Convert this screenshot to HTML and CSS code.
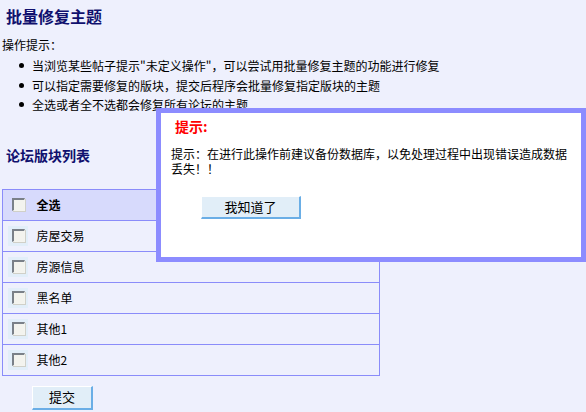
FILE: index.html
```html
<!DOCTYPE html>
<html lang="zh-CN">
<head>
<meta charset="utf-8">
<title>批量修复主题</title>
<link rel="stylesheet" href="styles.css">
</head>
<body>
<div class="page">
  <h1 class="title">批量修复主题</h1>
  <div class="tips-head">操作提示：</div>
  <ul class="tips">
    <li>当浏览某些帖子提示"未定义操作"，可以尝试用批量修复主题的功能进行修复</li>
    <li>可以指定需要修复的版块，提交后程序会批量修复指定版块的主题</li>
    <li>全选或者全不选都会修复所有论坛的主题</li>
  </ul>
  <h2 class="subtitle">论坛版块列表</h2>
  <table class="forums">
    <tr class="head">
      <td class="c-cb"><span class="cbwrap"><span class="cb"></span></span></td>
      <td class="c-name"><b>全选</b></td>
    </tr>
    <tr>
      <td class="c-cb"><span class="cbwrap"><span class="cb"></span></span></td>
      <td class="c-name">房屋交易</td>
    </tr>
    <tr>
      <td class="c-cb"><span class="cbwrap"><span class="cb"></span></span></td>
      <td class="c-name">房源信息</td>
    </tr>
    <tr>
      <td class="c-cb"><span class="cbwrap"><span class="cb"></span></span></td>
      <td class="c-name">黑名单</td>
    </tr>
    <tr>
      <td class="c-cb"><span class="cbwrap"><span class="cb"></span></span></td>
      <td class="c-name">其他1</td>
    </tr>
    <tr>
      <td class="c-cb"><span class="cbwrap"><span class="cb"></span></span></td>
      <td class="c-name">其他2</td>
    </tr>
  </table>
  <div class="actions"><button class="btn btn-submit" type="button">提交</button></div>
</div>

<div class="dialog">
  <div class="dlg-title">提示:</div>
  <div class="dlg-text">提示：在进行此操作前建议备份数据库，以免处理过程中出现错误造成数据丢失！！</div>
  <div class="dlg-actions"><button class="btn btn-ok" type="button">我知道了</button></div>
</div>
</body>
</html>
```

FILE: styles.css
```css
html, body {
  margin: 0;
  padding: 0;
  background: #eef0fd;
}
body {
  font-family: "Noto Sans CJK SC", "Liberation Sans", sans-serif;
  font-size: 12px;
  color: #000;
  width: 586px;
  height: 412px;
  overflow: hidden;
  position: relative;
}
.page {
  padding: 0 0 0 2px;
}
.title {
  margin: 0;
  padding: 6px 0 0 4px;
  font-size: 16px;
  line-height: 20px;
  font-weight: bold;
  color: #10106e;
}
.tips-head {
  margin-top: 11px;
  line-height: 16px;
}
.tips {
  margin: 3px 0 0 0;
  padding: 0 0 0 30px;
  list-style: none;
}
.tips li {
  position: relative;
  line-height: 19.5px;
  white-space: nowrap;
}
.tips li::before {
  content: "";
  position: absolute;
  left: -13px;
  top: 7px;
  width: 5px;
  height: 5px;
  border-radius: 50%;
  background: #000;
}
.subtitle {
  margin: 31px 0 0 0;
  padding-left: 4px;
  font-size: 14px;
  line-height: 18px;
  font-weight: bold;
  color: #10106e;
}
.forums {
  margin-top: 25px;
  border-collapse: collapse;
  width: 378px;
}
.forums td {
  border-top: 1px solid #8a8cfa;
  border-bottom: 1px solid #8a8cfa;
  height: 31px;
  padding: 0;
  box-sizing: border-box;
  vertical-align: middle;
}
.forums td:first-child { border-left: 1px solid #8a8cfa; }
.forums td:last-child { border-right: 1px solid #8a8cfa; }
.forums tr.head td { background: #d7dafc; }
.c-cb {
  width: 34px;
  padding-left: 5px !important;
}
.cbwrap {
  display: flex;
  align-items: center;
  justify-content: center;
  width: 20px;
  height: 20px;
  background: #e2eef9;
}
.head .cbwrap { background: transparent; }
.cb {
  display: block;
  width: 13px;
  height: 13px;
  box-sizing: border-box;
  border-top: 2px solid #7a8088;
  border-left: 2px solid #7a8088;
  border-right: 1px solid #f4f4f0;
  border-bottom: 1px solid #f4f4f0;
  background: #f3f3ee;
  box-shadow: 1px 1px 0 #d0d0c8;
}
.c-name {
  padding-left: 0;
}
.actions {
  padding: 10px 0 0 30px;
}
.btn {
  font-family: "Noto Sans CJK SC", "Liberation Sans", sans-serif;
  font-size: 13px;
  line-height: 18px;
  color: #000;
  background: #e1eef8;
  border-top: 1px solid #ffffff;
  border-left: 1px solid #ffffff;
  border-right: 2px solid #6aaee6;
  border-bottom: 2px solid #6aaee6;
  padding: 0;
  margin: 0;
  box-sizing: border-box;
}
.btn-submit {
  width: 61px;
  height: 24px;
}
.dialog {
  position: absolute;
  left: 156px;
  top: 108px;
  width: 430px;
  height: 154px;
  box-sizing: border-box;
  border: 5px solid #8c8cff;
  background: #fff;
  padding: 4px 10px 0 10px;
}
.dlg-title {
  padding-left: 4px;
  color: #ff0000;
  font-weight: bold;
  font-size: 14px;
  line-height: 18px;
}
.dlg-text {
  margin-top: 11px;
  line-height: 15px;
  padding-right: 4px;
}
.dlg-actions {
  padding: 20px 0 0 30px;
}
.btn-ok {
  width: 100px;
  height: 23px;
}
```
